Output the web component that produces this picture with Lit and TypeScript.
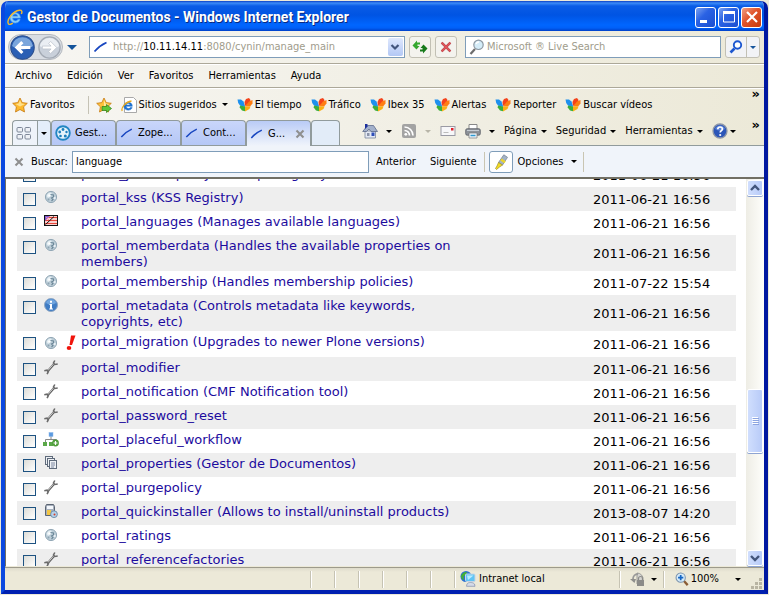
import { LitElement, html, css, svg, nothing } from "lit";
import { customElement } from "lit/decorators.js";

type Item = { icon: string; name: string; date: string; alert?: boolean };

const D = "2011-06-21 16:56";
const items: Item[] = [
  { icon: "tool", name: "portal_javascripts (JavaScript Registry)", date: D },
  { icon: "tool", name: "portal_kss (KSS Registry)", date: D },
  { icon: "flag", name: "portal_languages (Manages available languages)", date: D },
  { icon: "tool", name: "portal_memberdata (Handles the available properties on members)", date: D },
  { icon: "tool", name: "portal_membership (Handles membership policies)", date: "2011-07-22 15:54" },
  { icon: "info", name: "portal_metadata (Controls metadata like keywords, copyrights, etc)", date: D },
  { icon: "tool", name: "portal_migration (Upgrades to newer Plone versions)", date: D, alert: true },
  { icon: "wrench", name: "portal_modifier", date: D },
  { icon: "wrench", name: "portal_notification (CMF Notification tool)", date: D },
  { icon: "wrench", name: "portal_password_reset", date: D },
  { icon: "workflow", name: "portal_placeful_workflow", date: D },
  { icon: "pages", name: "portal_properties (Gestor de Documentos)", date: D },
  { icon: "wrench", name: "portal_purgepolicy", date: D },
  { icon: "installer", name: "portal_quickinstaller (Allows to install/uninstall products)", date: "2013-08-07 14:20" },
  { icon: "tool", name: "portal_ratings", date: D },
  { icon: "wrench", name: "portal_referencefactories", date: D },
];

const star = "M8 1 L10.2 5.6 L15.3 6.3 L11.6 9.8 L12.5 15 L8 12.5 L3.5 15 L4.4 9.8 L0.7 6.3 L5.8 5.6 Z";

const glyphs: Record<string, unknown> = {
  tool: svg`<circle cx="8" cy="8" r="5.6" fill="#bccdd7" stroke="#93a8b6"/>
    <path d="M3.600 7a4.600 4.600 0 0 1 4-3.500L9 5 7.500 7.500 5 9z" fill="#e6eff4"/>
    <path d="M7.500 5.500l3 .5v2l-2 1 1.500 1.500-1.500 1.500" fill="none" stroke="#6c8798" stroke-width="1.100"/>
    <circle cx="6.200" cy="6.500" r="1" fill="#fff"/><circle cx="11.700" cy="9" r="1.100" fill="#eef5f9"/><circle cx="5.500" cy="10.500" r="1" fill="#8ea5b3"/>`,
  flag: svg`<rect x="1" y="2.500" width="14" height="11" fill="#fff"/>
    <path d="M2 4.500h12M2 7.500h12M2 10.500h12" stroke="#e8463a" stroke-width="1.600"/>
    <path d="M2 3h5L2 8z" fill="#7a5ad8"/><path d="M3 4l3 3M6 3.500L3 7" stroke="#f08cac"/>
    <path d="M2.500 11.500L11 3.500" stroke="#111"/>
    <rect x="1.500" y="2.500" width="13" height="10" fill="none" stroke="#111"/>`,
  info: svg`<circle cx="8" cy="8" r="6.500" fill="#3f7cc4" stroke="#8fa8c4"/>
    <path d="M3 6a5.200 5.200 0 0 1 10 0 9 9 0 0 1-10 0z" fill="#6fa4de"/>
    <path d="M7 3.800h2v2H7zM6.500 7H9v4.500h1V12.500H6.200v-1H7V8h-.5z" fill="#fff"/>`,
  wrench: svg`<path d="M4.500 12.500L11 5" stroke="#5c5c5c" stroke-width="2"/>
    <path d="M4.700 11.800L10.800 4.800" stroke="#e8e8e8" stroke-width=".8"/>
    <path d="M11.800 1.500L10.500 4l1.200 1.500 3-.5M1.300 11.800l2.700-.6 1.300 1.500-1.200 2.500" fill="none" stroke="#6a6a6a" stroke-width="1.600"/>`,
  workflow: svg`<path d="M8 5v4M2.500 11V8.500h11V11" fill="none" stroke="#888"/>
    <rect x="6" y="1.500" width="4" height="4" fill="#5c9ae0" stroke="#8bb8ea" stroke-width=".5"/>
    <rect x="0" y="11" width="4" height="4" fill="#5aa848"/><rect x="6" y="11" width="4" height="4" fill="#5aa848"/>
    <circle cx="12.500" cy="12" r="3.400" fill="#4e9c38"/><path d="M12.500 10v4M10.500 12h4" stroke="#fff" stroke-width="1.200"/>`,
  pages: svg`<g fill="#eef1f5" stroke="#5f6b7b"><rect x="2.500" y="1.500" width="7" height="8"/><rect x="4.500" y="3.500" width="7" height="8"/>
    <rect x="6.500" y="5.500" width="7" height="8"/></g><path d="M8 8h4M8 10h4M8 12h3" stroke="#60708a" stroke-width=".8"/>`,
  installer: svg`<path d="M2.500 3.500l1-2h7l1 2v9h-9z" fill="#a8b1be" stroke="#5a6472"/>
    <rect x="4" y="3" width="6" height="3" fill="#f4f7fb"/><rect x="4" y="7" width="4" height="5" fill="#f3c644"/>
    <circle cx="11" cy="11.200" r="3.400" fill="#b5d2ea" stroke="#5f7f9e" stroke-width=".8"/><circle cx="11.500" cy="11.500" r="1" fill="#d8402a"/>`,
  alert: svg`<path d="M8 .5h4.500L9 10H6.500z" fill="#f0140c"/><ellipse cx="6" cy="13" rx="2.300" ry="2" fill="#f0140c"/>`,
  ie: svg`<path d="M13.300 9H5.500c.2 3.600 4.600 3.800 5.300 1.600h2.300c-1.500 5-10 4.400-10-2C3.100 2.300 13.300 1.800 13.300 9zM5.600 7.200h5.200c-.4-2.800-4.700-2.900-5.200 0z" fill="#8fd0fa" stroke="#5fb0f0" stroke-width=".7"/>
    <path d="M1.500 15C-1 11 6 2 12.500 1.200c2.600-.3 2.900 1.700 1.800 3.800M1.500 15c1 .9 2.800.2 4.300-.8" fill="none" stroke="#f5bb2d" stroke-width="1.400"/>`,
  iepage: svg`<path d="M3.500.5h9l3 3v12h-12z" fill="#fff" stroke="#a9a9a9"/>
    <path d="M11.300 9.300H5.200c.2 2.600 3.600 2.600 4 1.300h2c-1.200 3.900-8.400 3.200-8.400-1.500C2.800 4.300 11.500 3.700 11.300 9.300zM5.300 8h3.700c-.3-2-3.300-2-3.700 0z" fill="#1f72d0" stroke="#1f72d0" stroke-width=".5"/>
    <path d="M1.300 13.800C-.5 11 5 4.600 10.500 4" fill="none" stroke="#e8a81c" stroke-width="1.300"/>`,
  star: svg`<path d=${star} fill="#fdb92c" stroke="#c7790f" stroke-width=".8"/><path d="M8 3l1.500 3.600 3.500.5-5 2.400-4.500-2.600 3-.4z" fill="#ffe08a"/>`,
  addstar: svg`<path d=${star} fill="#fdc23c" stroke="#c7790f" stroke-width=".8"/><path d="M8 3l1.500 3.600 3.500.5-5 2.400z" fill="#ffe79c"/>
    <path d="M6 9.500h4.500V7.500L15.500 11.500l-5 4V13.500H6z" fill="#5fc83a" stroke="#2f7d19" stroke-width=".7"/>`,
  msn: svg`<path d="M8 9L6.500 4.500 4 2.500H.5l.7 3.500L3 8.500 7.500 10z" fill="#1e90ee"/>
    <path d="M8 9.500L3 8.500l-.3 2L5 13.500l3 .8z" fill="#3cae3c"/>
    <path d="M8 9L7.500 5 9 2 12 1l1.500 2-.8 3z" fill="#f4421a"/>
    <path d="M8 9.500l4-5L15.500 3v3.500L13 9.500z" fill="#ff7d12"/>
    <path d="M8 9.500h5.500l-1 2.500L8 14.500z" fill="#fbb014"/>`,
  pen: svg`<path d="M1.500 12.500C4 9.500 8 6 13.500 3.500" fill="none" stroke="#1947c0" stroke-width="1.700"/>`,
  cynin: svg`<circle cx="8" cy="8" r="6.800" fill="#e6f4fb" stroke="#2286c3" stroke-width="1.900"/>
    <g fill="#1d7fbd"><circle cx="8" cy="4.500" r="1.400"/><circle cx="11.500" cy="7" r="1.200"/><circle cx="10.300" cy="11" r="1.500"/><circle cx="5.500" cy="11" r="1.300"/><circle cx="4.700" cy="7" r="1.400"/></g>`,
  grid: svg`<g fill="#eef1f6" stroke="#7d8798"><rect x="1" y="2.500" width="5.500" height="4.500" rx="1"/><rect x="9" y="2.500" width="5.500" height="4.500" rx="1"/>
    <rect x="1" y="9.500" width="5.500" height="4.500" rx="1"/><rect x="9" y="9.500" width="5.500" height="4.500" rx="1"/></g>`,
  cross: svg`<path d="M4 4l8 8M12 4l-8 8" stroke="#8f8f8f" stroke-width="2.400"/>`,
  home: svg`<path d="M3 8h10.500v7H3z" fill="#e4e9f4" stroke="#7a859c" stroke-width=".8"/><path d="M.7 8.500L5.500 2.500h6L15.500 8.500H9L7 6 4.500 8.500z" fill="#a3b1cb" stroke="#5d6b8c" stroke-width=".8"/>
    <path d="M3 1h2.500v2.500L3 6z" fill="#1b2f9c"/><rect x="5" y="10" width="2.500" height="3" fill="#8a93a8"/><rect x="9.500" y="9.500" width="3" height="3.500" fill="#2f4fb8"/>`,
  rss: svg`<rect x="1" y="1" width="14" height="14" rx="2" fill="#a3a3a3"/><circle cx="4.800" cy="11.300" r="1.400" fill="#fff"/>
    <path d="M3.500 7.500a5 5 0 0 1 5 5M3.500 4a8.500 8.500 0 0 1 8.500 8.500" fill="none" stroke="#fff" stroke-width="1.700"/>`,
  mail: svg`<rect x="1" y="3.500" width="14" height="9" fill="#f7f7f9" stroke="#9a9aa4"/><rect x="11" y="5" width="2.500" height="2.500" fill="#e0202a"/><path d="M3.500 9.500h5" stroke="#bbb"/>`,
  print: svg`<path d="M4 1.500h8v5H4z" fill="#fff" stroke="#888"/><rect x=".7" y="5.700" width="14.600" height="6.500" rx="1.500" fill="#8d9299" stroke="#5c6067" stroke-width=".8"/>
    <path d="M2 7.500h12" stroke="#c7cdd4"/><path d="M4 10h8v5H4z" fill="#eef4fb" stroke="#777" stroke-width=".7"/><path d="M5.500 12.500h5" stroke="#2f9ad0" stroke-width="1.500"/>`,
  help: svg`<circle cx="8" cy="8" r="7" fill="#2c56b8" stroke="#8c96a8" stroke-width="1.300"/><path d="M3 6a5.300 5.300 0 0 1 10 0 9 9 0 0 1-10 0z" fill="#5b83d8"/>
    <path d="M5.800 6.200c0-3 4.600-2.800 4.600-.3 0 1.700-2.200 1.700-2.200 3.600" fill="none" stroke="#fff" stroke-width="1.700"/><circle cx="8.200" cy="12" r="1.100" fill="#fff"/>`,
  marker: svg`<path d="M5.500 8.500L10.800.8l3.700 2.500L9.500 11z" fill="#a4b4c6" stroke="#7b8898" stroke-width=".8"/><path d="M8 5.500l4 2.700" stroke="#ecd42c" stroke-width="2.400"/>
    <path d="M5.500 8.500L9.500 11l-3 2-3 2.500L2.500 14.500 4 12z" fill="#f3dc22" stroke="#9c8d28" stroke-width=".7"/>`,
  refresh: svg`<path d="M.5 6.500L5 1.500v2h3v2H5.500V7h2L4.500 10.500z" fill="#35a82f"/>
    <path d="M15.500 9.500l-4.500 5v-2H8v-2h2.500V9h-2l3-3.500z" fill="#177a1b"/>`,
  stop: svg`<path d="M3 3l10 10M13 3L3 13" stroke="#9f3f45" stroke-width="2.800"/><path d="M3 3l10 10M13 3L3 13" stroke="#e0555a" stroke-width="1.900"/>`,
  lens: svg`<path d="M6 10L1.500 15" stroke="#6d6d6d" stroke-width="2.200"/><circle cx="9.500" cy="5.800" r="4.700" fill="#d4ecf8" stroke="#8d98a2" stroke-width="1.200"/><path d="M7 5a3 3 0 0 1 3-2" fill="none" stroke="#fff" stroke-width="1.300"/>`,
  bluelens: svg`<path d="M6.500 9.500L2.500 13.500" stroke="#1d57d0" stroke-width="2.600"/><circle cx="9.500" cy="6" r="3.700" fill="#fff" stroke="#1d57d0" stroke-width="1.900"/>`,
  zoom: svg`<path d="M10 10l4.500 5" stroke="#8a5c34" stroke-width="2.600"/><circle cx="6.500" cy="6.500" r="5.300" fill="#d6ecfa" stroke="#7b93ad" stroke-width="1.200"/><path d="M6.500 3.500v6M3.500 6.500h6" stroke="#1767c4" stroke-width="2"/>`,
  privacy: svg`<path d="M8 2a6 6 0 0 1 6 7v4H8z" fill="#d3d3d0" stroke="#9c9c98"/><path d="M1 8h6L5.500 12z" fill="#8f8f8c"/><path d="M4 8a5 5 0 0 1 5-5" fill="none" stroke="#999" stroke-width="1.800"/>
    <rect x="8" y="9" width="7" height="6" fill="#8b8b88"/><path d="M9.500 9V7.500a2 2 0 0 1 4 0V9" fill="none" stroke="#8b8b88" stroke-width="1.200"/>`,
  intranet: svg`<circle cx="6" cy="5.500" r="5.500" fill="#2a6fd0"/><path d="M1 5c1-3 4-4.500 6-4L6 4 3.500 5.500 4 9C2 8.500 1 7 1 5z" fill="#42b034"/>
    <rect x="5.500" y="3" width="9.500" height="7.500" rx="1" fill="#5fc4f4" stroke="#c8d4e4"/><path d="M7 4.500h6.500L8 9z" fill="#b9ebff"/><path d="M7 13c1-2 6-2 7.500 0l.5 2.300H6.500z" fill="#d5dbe8" stroke="#8c97b4" stroke-width=".8"/>`,
  back: svg`<circle cx="8" cy="8" r="7.500" fill="#2b5fb4" stroke="#2a4d8c" stroke-width=".7"/><path d="M1.300 7a6.800 6.800 0 0 1 13.400 0 11 11 0 0 1-13.400 0z" fill="#7ba6dc"/>
    <path d="M3 8l4.200-4.200 1.400 1.400L6.900 7H13v2H6.900l1.700 1.800-1.400 1.400z" fill="#fff"/>`,
  fwd: svg`<circle cx="8" cy="8" r="7.400" fill="#c9d0da" stroke="#a4abb5" stroke-width=".9"/><path d="M1.300 7a6.800 6.800 0 0 1 13.400 0 11 11 0 0 1-13.400 0z" fill="#eaeef3"/>
    <path d="M13 8L8.800 3.800 7.400 5.200 9.100 7H3v2h6.100l-1.700 1.800 1.400 1.400z" fill="#fff" stroke="#b9c0ca" stroke-width=".5"/>`,
};

const icon = (name: string, cls = "") =>
  html`<svg class="icon ${cls}" viewBox="0 0 16 16" aria-hidden="true">${glyphs[name]}</svg>`;
const tri = (cls = "") => html`<span class="tri ${cls}"></span>`;

@customElement("app-root")
export class AppRoot extends LitElement {
  static styles = css`
    :host { display: block; height: 100vh; background: #ece9d8; overflow: hidden; box-sizing: border-box; padding: 1px;
      font: 11px/14px "DejaVu Sans Condensed", "DejaVu Sans", sans-serif; color: #000; }
    * { box-sizing: border-box; }
    button, input { font: inherit; color: inherit; margin: 0; padding: 0; border: 0; background: none; white-space: nowrap; outline: 0; min-width: 0; }
    a { color: inherit; text-decoration: none; }
    .icon { width: 16px; height: 16px; flex: none; display: block; }
    .i14 { width: 14px; height: 14px; }
    .i24 { width: 25px; height: 25px; }
    .i22 { width: 23px; height: 23px; }
    .tri { width: 0; height: 0; flex: none; border: 3px solid transparent; border-top-color: #000; border-bottom: 0; }
    .tri.blue { border-top-color: #17559c; }
    .tri.big { border-width: 5px 5px 0; border-top-color: #14549b; }
    .tri.dim { border-top-color: #b8b5a8; }
    .row { display: flex; align-items: center; }

    .window { height: 100%; display: flex; flex-direction: column; border-radius: 7px 7px 0 0; overflow: hidden;
      border: solid; border-width: 0 4px 4px; border-color: #0a48e0 #0018a0 #0020b0 #0a48e0; background: #ece9d8; }
    .title { height: 30px; flex: none; gap: 4px; color: #fff; margin: 0 -4px; padding: 2px 6px 0;
      background: linear-gradient(#0a3fc4, #3c8cf8 2px, #0a5ce6 5px, #0054e3 14px, #0066ff 24px, #0060f8 27px, #0040c8); }
    .title h1 { margin: 0; flex: 1; font: bold 14px/18px Roboto, sans-serif; text-shadow: 1px 1px #0a2a80; white-space: nowrap; }
    .title .buttons { display: flex; gap: 2px; }
    .title button { width: 21px; height: 21px; border: 1px solid #fff; border-radius: 3px; background: linear-gradient(135deg, #7ba2f0, #2a62e4 40%, #1a4ed0); display: grid; place-items: center; }
    .title button.close { background: linear-gradient(135deg, #f0a084, #e0532a 45%, #c83a0c); }

    .bar { flex: none; background: linear-gradient(90deg, #f7f6f3, #ece9d8); }
    .nav { height: 33px; padding: 0 4px 0 3px; border-bottom: 1px solid #aca899; gap: 4px; }
    .travel { display: flex; align-items: center; gap: 3px; border: 1px solid #b5b9bf; border-radius: 14px; background: #d9dde3; padding: 0 1px; height: 26px; }
    .travel button { display: block; }
    .nav .recent { width: 10px; display: grid; justify-items: center; }
    .box { height: 22px; display: flex; align-items: center; background: #fff; border: 1px solid #7f9db9; padding: 1px; }
    .address { flex: 316 1 0; gap: 4px; padding-left: 3px; color: #a09c8c; white-space: nowrap; margin-left: 8px; }
    .address b { font-weight: normal; color: #000; }
    .address .text { flex: 1; overflow: hidden; }
    .drop { width: 15px; height: 18px; background: linear-gradient(#dfe8fd, #b3c8f5); border-radius: 2px; display: grid; place-items: center; }
    .sq { width: 22px; height: 22px; border: 1px solid #c2c0b4; border-radius: 3px; background: #f4f3ee; display: grid; place-items: center; }
    .search { flex: 255 1 0; gap: 2px; margin-left: 4px; padding-left: 3px; }
    .search input { flex: 1; }
    .search input::placeholder { color: #a09c8c; opacity: 1; }
    .split { display: flex; height: 22px; border: 1px solid #c2c0b4; border-radius: 3px; background: #f2f3f6; }
    .split button { display: grid; place-items: center; width: 20px; }
    .split button + button { width: 13px; border-left: 1px solid #c2c0b4; }

    .menu { height: 24px; padding: 0 10px; gap: 15px; border-top: 1px solid #fff; border-bottom: 1px solid #aca899; }
    .favs { height: 32px; padding: 0 4px 0 7px; border-top: 1px solid #fff; gap: 9px; }
    .favs a, .favs button { display: flex; align-items: center; gap: 2px; white-space: nowrap; }
    .favs .tri { margin-left: 3px; }
    .favs .vsep { height: 18px; margin: 0 -2px 0 4px; }
    .vsep { width: 1px; background: #c5c2b5; flex: none; align-self: center; }
    .bar .more { margin-left: auto; align-self: flex-start; font: bold 13px/10px "DejaVu Sans", sans-serif; }

    .tabrow { height: 26px; padding: 0 4px 0 7px; align-items: stretch; border-bottom: 1px solid #919b9c; }
    .tab { width: 65px; height: 25px; padding: 0 3px; display: flex; align-items: center; gap: 4px; border: 1px solid #919b9c; border-width: 1px 1px 0;
      border-radius: 4px 4px 0 0; background: linear-gradient(#c9d6fa, #b5c7f6); white-space: nowrap; overflow: hidden; flex: none; }
    .tab.active { height: 26px; background: linear-gradient(#b9cbf6, #f0f4fb); }
    .tab .label { flex: 1; text-align: left; }
    .tab.quick { width: 25px; background: #eef3fa; border-right-width: 0; border-radius: 4px 0 0 0; }
    .tab.list { width: 14px; justify-content: center; background: #e4eefa; border-radius: 0 4px 0 0; }
    .tab.new { width: 29px; background: #e2ecf8; }
    .commands { margin-left: auto; margin-right: 16px; display: flex; align-items: center; gap: 9px; height: 22px; align-self: flex-start; }
    .commands button { display: flex; align-items: center; gap: 4px; height: 20px; }
    .commands button.pic { gap: 8px; }
    .commands button.tight { gap: 2px; }
    .tabrow .more { margin-left: 0; }

    .find { height: 31px; flex: none; background: #f0f4fa; padding: 0 7px; }
    .find label { margin: 0 4px 0 5px; }
    .find .term { flex: 0 1 297px; padding: 0 3px; }
    .find .text { padding: 0 7px; }
    .find .vsep { height: 20px; background: #c9c5b2; margin: 0 4px 0 0; }
    .find .mark { width: 24px; height: 22px; border-color: #7f9db9; background: #fff; margin-right: 5px; }
    .find .opt { display: flex; align-items: center; gap: 8px; margin-right: 6px; }

    .view { flex: 1; min-height: 0; display: flex; background: #fff; border-top: 2px solid #716f64; border-left: 1px solid #716f64; border-bottom: 1px solid #ece9d8; }
    .page { flex: 1; overflow: hidden; padding: 0 10px 0 11px; }
    table { width: 100%; table-layout: fixed; border-collapse: collapse; margin-top: -16px; font: 13px/16px "DejaVu Sans", Verdana, sans-serif; }
    tr { height: 24px; }
    tr:nth-child(even) { background: #eee; }
    td { padding: 3px 0 1px; vertical-align: top; }
    .ccheck { width: 26px; } .cicon { width: 38px; } .cname { width: 55%; } .cdate { width: 143px; }
    td.check { padding: 6px 0 0 6px; line-height: 0; }
    td.pic { padding: 2px 0; }
    td.date { vertical-align: middle; white-space: nowrap; }
    tr.alert { height: 26px; }
    tr.alert td.pic { padding-top: 4px; }
    .pair { display: flex; gap: 4px; }
    td a { color: #1c0b9e; }
    td input { appearance: none; width: 13px; height: 13px; border: 1px solid #1d5281; background: linear-gradient(135deg, #dcdcd7, #fff); display: block; }

    .scroll { width: 18px; flex: none; padding: 1px 1px 0; background: linear-gradient(90deg, #eeede5, #fefefb); display: flex; flex-direction: column; }
    .scroll button { width: 16px; height: 16px; flex: none; border: 1px solid #fff; border-radius: 2px; background: linear-gradient(90deg, #d0defd, #b8cbf8); display: grid; place-items: center; box-shadow: 0 1px #8ea4d2; }
    .scroll .thumb { height: 64px; }
    .above { flex: 2; } .below { flex: 1; }

    .status { height: 23px; flex: none; border-top: 1px solid #9d9a8b; background: linear-gradient(#dedbcb, #ece9d8 4px); padding: 0 1px 0 0; }
    .status .panes { margin-left: 305px; flex: none; display: flex; gap: 22px; }
    .status .groove { width: 2px; height: 17px; border-left: 1px solid #c6c3b3; border-right: 1px solid #fff; flex: none; }
    .status .zone { margin-left: 4px; gap: 3px; white-space: nowrap; }
    .status .zone + .groove { margin-left: auto; }
    .status button { display: flex; align-items: center; }
    .status .priv { gap: 6px; padding: 0 6px 0 8px; }
    .status .pct { gap: 2px; padding: 0 10px; }
    .status .pct .tri { margin-left: 14px; }
    .status .grip { width: 12px; height: 12px; align-self: flex-end; }
  `;

  private tab(pic: string, label: string) {
    return html`<button class="tab">${icon(pic, pic === "pen" ? "i14" : "")}<span class="label">${label}</span></button>`;
  }

  private fav(label: string) {
    return html`<a href="#">${icon("msn")}<span>${label}</span></a>`;
  }

  private item(r: Item) {
    return html`<tr class=${r.alert ? "alert" : ""}>
      <td class="check"><input type="checkbox" aria-label=${r.name}></td>
      <td class="pic"><div class="pair">${icon(r.icon)}${r.alert ? icon("alert") : nothing}</div></td>
      <td><a href="#">${r.name}</a></td>
      <td></td>
      <td class="date">${r.date}</td>
    </tr>`;
  }

  render() {
    return html`<div class="window">
      <header class="title row">
        ${icon("ie")}
        <h1>Gestor de Documentos - Windows Internet Explorer</h1>
        <div class="buttons">
          <button aria-label="Minimizar"><svg class="icon" viewBox="0 0 16 16"><path d="M2 11h7v3H2z" fill="#fff"/></svg></button>
          <button aria-label="Maximizar"><svg class="icon" viewBox="0 0 16 16"><path d="M2.500 3v10h11V3z" fill="none" stroke="#fff"/><path d="M2 2h12v3H2z" fill="#fff"/></svg></button>
          <button class="close" aria-label="Cerrar"><svg class="icon" viewBox="0 0 16 16"><path d="M3 3l10 10M13 3L3 13" stroke="#fff" stroke-width="2.200"/></svg></button>
        </div>
      </header>

      <div class="bar nav row">
        <div class="travel"><button aria-label="Atrás">${icon("back", "i24")}</button><button aria-label="Adelante">${icon("fwd", "i22")}</button></div>
        <button class="recent" aria-label="Páginas recientes">${tri("big")}</button>
        <div class="box address">${icon("pen")}<span class="text">http://<b>10.11.14.11</b>:8080/cynin/manage_main</span>
          <button class="drop" aria-label="Historial"><svg class="icon i14" viewBox="0 0 14 14"><path d="M3.500 5L7 8.500 10.500 5" fill="none" stroke="#42557c" stroke-width="2.200"/></svg></button></div>
        <button class="sq" aria-label="Actualizar">${icon("refresh")}</button>
        <button class="sq" aria-label="Detener">${icon("stop", "i14")}</button>
        <div class="box search">${icon("lens")}<input type="search" aria-label="Buscar en la Web" placeholder="Microsoft ® Live Search"></div>
        <div class="split"><button aria-label="Buscar">${icon("bluelens")}</button><button aria-label="Opciones de búsqueda">${tri("blue")}</button></div>
      </div>

      <nav class="bar menu row">
        ${["Archivo", "Edición", "Ver", "Favoritos", "Herramientas", "Ayuda"].map((m) => html`<button>${m}</button>`)}
      </nav>

      <div class="bar favs row">
        <button>${icon("star")}<span>Favoritos</span></button>
        <span class="vsep"></span>
        <button aria-label="Agregar a favoritos">${icon("addstar")}</button>
        <a href="#">${icon("iepage")}<span>Sitios sugeridos</span>${tri()}</a>
        ${["El tiempo", "Tráfico", "Ibex 35", "Alertas", "Reporter", "Buscar vídeos"].map((f) => this.fav(f))}
        <button class="more" aria-label="Más favoritos">»</button>
      </div>

      <div class="bar tabrow row">
        <button class="tab quick" aria-label="Pestañas rápidas">${icon("grid")}</button>
        <button class="tab list" aria-label="Lista de pestañas">${tri()}</button>
        ${this.tab("cynin", "Gest...")}${this.tab("pen", "Zope...")}${this.tab("pen", "Cont...")}
        <button class="tab active">${icon("pen", "i14")}<span class="label">G...</span>${icon("cross", "i14")}</button>
        <button class="tab new" aria-label="Nueva pestaña"></button>
        <div class="commands">
          <button class="pic" aria-label="Página principal">${icon("home")}${tri()}</button>
          <button class="pic" aria-label="Fuentes">${icon("rss")}${tri("dim")}</button>
          <button aria-label="Leer correo">${icon("mail")}</button>
          <button class="pic" aria-label="Imprimir">${icon("print")}${tri()}</button>
          <button>Página${tri()}</button>
          <button>Seguridad${tri()}</button>
          <button>Herramientas${tri()}</button>
          <button class="tight" aria-label="Ayuda">${icon("help")}${tri()}</button>
        </div>
        <button class="more" aria-label="Más comandos">»</button>
      </div>

      <div class="find row">
        <button aria-label="Cerrar búsqueda">${icon("cross", "i14")}</button>
        <label for="term">Buscar:</label>
        <input id="term" class="box term" type="text" value="language">
        <button class="text">Anterior</button>
        <button class="text">Siguiente</button>
        <span class="vsep"></span>
        <button class="sq mark" aria-label="Resaltar">${icon("marker")}</button>
        <button class="opt">Opciones${tri()}</button>
        <span class="vsep"></span>
      </div>

      <main class="view">
        <div class="page">
          <table>
            <colgroup><col class="ccheck"><col class="cicon"><col class="cname"><col><col class="cdate"></colgroup>
            <tbody>${items.map((r) => this.item(r))}</tbody>
          </table>
        </div>
        <div class="scroll">
          <button aria-label="Subir"><svg class="icon i14" viewBox="0 0 14 14"><path d="M3 9l4-4 4 4" fill="none" stroke="#42557c" stroke-width="2.400"/></svg></button>
          <span class="above"></span>
          <button class="thumb" aria-label="Desplazar"><svg class="icon i14" viewBox="0 0 14 14"><path d="M4 3.500h6M4 5.500h6M4 7.500h6M4 9.500h6" stroke="#fff"/><path d="M5 4.500h6M5 6.500h6M5 8.500h6M5 10.500h6" stroke="#8ca4e0"/></svg></button>
          <span class="below"></span>
          <button aria-label="Bajar"><svg class="icon i14" viewBox="0 0 14 14"><path d="M3 5l4 4 4-4" fill="none" stroke="#42557c" stroke-width="2.400"/></svg></button>
        </div>
      </main>

      <footer class="status row">
        <div class="panes">${[1, 2, 3, 4, 5, 6, 7].map(() => html`<span class="groove"></span>`)}</div>
        <div class="zone row">${icon("intranet")}<span>Intranet local</span></div>
        <span class="groove"></span>
        <button class="priv" aria-label="Privacidad">${icon("privacy")}${tri()}</button>
        <span class="groove"></span>
        <button class="pct">${icon("zoom", "i14")}<span>100%</span>${tri()}</button>
        <svg class="grip" viewBox="0 0 12 12" aria-hidden="true"><path d="M8 0h3v3H8zM4 4h3v3H4zM8 4h3v3H8zM0 8h3v3H0zM4 8h3v3H4zM8 8h3v3H8z" fill="#b8b4a2"/></svg>
      </footer>
    </div>`;
  }
}
